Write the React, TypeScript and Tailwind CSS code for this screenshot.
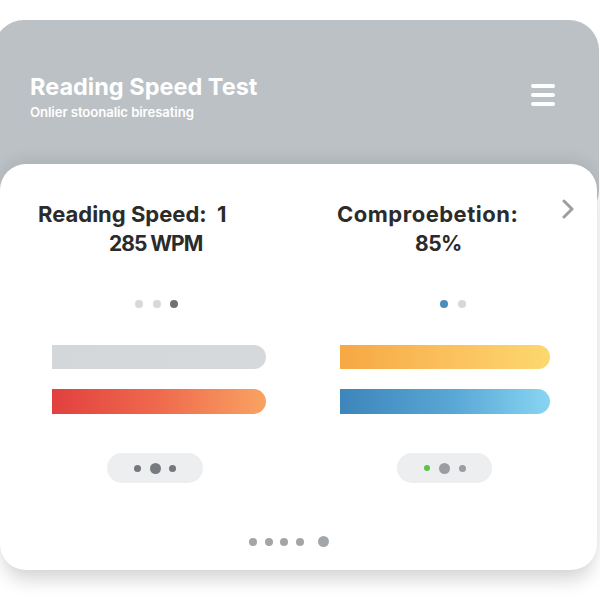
import React from "react";

export default function App() {
  return (
    <div className="w-[600px] h-[600px] bg-white overflow-hidden font-['Inter','Liberation_Sans',sans-serif]">
      <div className="pt-[20px]">
        {/* Gray header card */}
        <div className="ml-[-6px] w-[605px] h-[200px] rounded-[30px] bg-[#bcc1c5] flex justify-between pl-[36px] pr-[44px] pt-[53px]">
          <div className="flex flex-col">
            <div className="text-[23.5px] leading-[28px] font-bold text-white tracking-[0px]">Reading Speed Test</div>
            <div className="text-[13.2px] leading-[16px] font-semibold text-white mt-[3px] tracking-[-0.1px]">Onlier stoonalic biresating</div>
          </div>
          <div className="flex flex-col gap-[5.5px] pt-[11px]">
            <div className="w-[24px] h-[3.5px] rounded-full bg-white" />
            <div className="w-[24px] h-[3.5px] rounded-full bg-white" />
            <div className="w-[24px] h-[3.5px] rounded-full bg-white" />
          </div>
        </div>

        {/* White main card */}
        <div className="relative mt-[-56px] w-[597px] h-[406px] bg-white rounded-[26px] shadow-[0_-6px_14px_rgba(0,0,0,0.07),0_14px_18px_-4px_rgba(0,0,0,0.16)] pl-[52px] pt-[35px]">
          <svg className="absolute right-[22px] top-[35px]" width="14" height="20" viewBox="0 0 14 20" fill="none">
            <path d="M3 2 L11 10 L3 18" stroke="#9b9fa3" strokeWidth="3" strokeLinecap="round" strokeLinejoin="round" />
          </svg>
          <div className="grid grid-cols-[214px_210px] gap-x-[74px]">
            {/* Left column */}
            <div className="flex flex-col">
              <div className="flex flex-col font-bold text-[#2b2b2b] leading-[30px]">
                <div className="ml-[-14px] whitespace-pre text-[22px] tracking-[0px]">Reading Speed:  1</div>
                <div className="ml-[57px] flex gap-[4px] text-[21px] tracking-[-1px]">
                  <span>285</span>
                  <span>WPM</span>
                </div>
              </div>
              <div className="flex gap-[9.5px] ml-[83px] mt-[41px]">
                <div className="w-[8px] h-[8px] rounded-full bg-[#d6d8db]" />
                <div className="w-[8px] h-[8px] rounded-full bg-[#d6d8db]" />
                <div className="w-[8px] h-[8px] rounded-full bg-[#6d7176]" />
              </div>
              <div className="mt-[37px] h-[24px] w-[214px] rounded-r-full bg-[linear-gradient(90deg,#d4d7da,#d6d9dc)]" />
              <div className="mt-[20px] h-[25px] w-[214px] rounded-r-full bg-[linear-gradient(90deg,#e2403f,#ef6a4d_50%,#f9a362)]" />
              <div className="mt-[39px] ml-[55px] w-[96px] h-[30px] rounded-full bg-[#eceef0] flex items-center justify-center gap-[8.5px]">
                <div className="w-[7px] h-[7px] rounded-full bg-[#74787c]" />
                <div className="w-[11px] h-[11px] rounded-full bg-[#777b80]" />
                <div className="w-[7px] h-[7px] rounded-full bg-[#74787c]" />
              </div>
            </div>

            {/* Right column */}
            <div className="flex flex-col">
              <div className="flex flex-col font-bold text-[#2b2b2b] leading-[30px]">
                <div className="ml-[-3px] whitespace-pre text-[22px] tracking-[0.5px]">Comproebetion:</div>
                <div className="ml-[75px] whitespace-pre text-[21px] tracking-[-0.5px]">85%</div>
              </div>
              <div className="flex gap-[10px] ml-[100px] mt-[41px]">
                <div className="w-[8px] h-[8px] rounded-full bg-[#4a8cba]" />
                <div className="w-[8px] h-[8px] rounded-full bg-[#d6d8db]" />
              </div>
              <div className="mt-[37px] h-[24px] w-[210px] rounded-r-full bg-[linear-gradient(90deg,#f6a843,#fbc25e_55%,#fcd86f)]" />
              <div className="mt-[20px] h-[25px] w-[210px] rounded-r-full bg-[linear-gradient(90deg,#3d85ba,#5aa8d6_55%,#88d5f2)]" />
              <div className="mt-[39px] ml-[57px] w-[95px] h-[30px] rounded-full bg-[#eceef0] flex items-center justify-center gap-[9px]">
                <div className="w-[6px] h-[6px] rounded-full bg-[#5cc444]" />
                <div className="w-[11px] h-[11px] rounded-full bg-[#9a9ea3]" />
                <div className="w-[7px] h-[7px] rounded-full bg-[#9a9ea3]" />
              </div>
            </div>
          </div>

          {/* Bottom pager */}
          <div className="mt-[53px] ml-[197px] flex items-center">
            <div className="flex gap-[7.5px]">
              <div className="w-[8px] h-[8px] rounded-full bg-[#a3a6a9]" />
              <div className="w-[8px] h-[8px] rounded-full bg-[#a3a6a9]" />
              <div className="w-[8px] h-[8px] rounded-full bg-[#a3a6a9]" />
              <div className="w-[8px] h-[8px] rounded-full bg-[#a3a6a9]" />
            </div>
            <div className="ml-[14px] w-[11px] h-[11px] rounded-full bg-[#a3a6a9]" />
          </div>
        </div>
      </div>
    </div>
  );
}
